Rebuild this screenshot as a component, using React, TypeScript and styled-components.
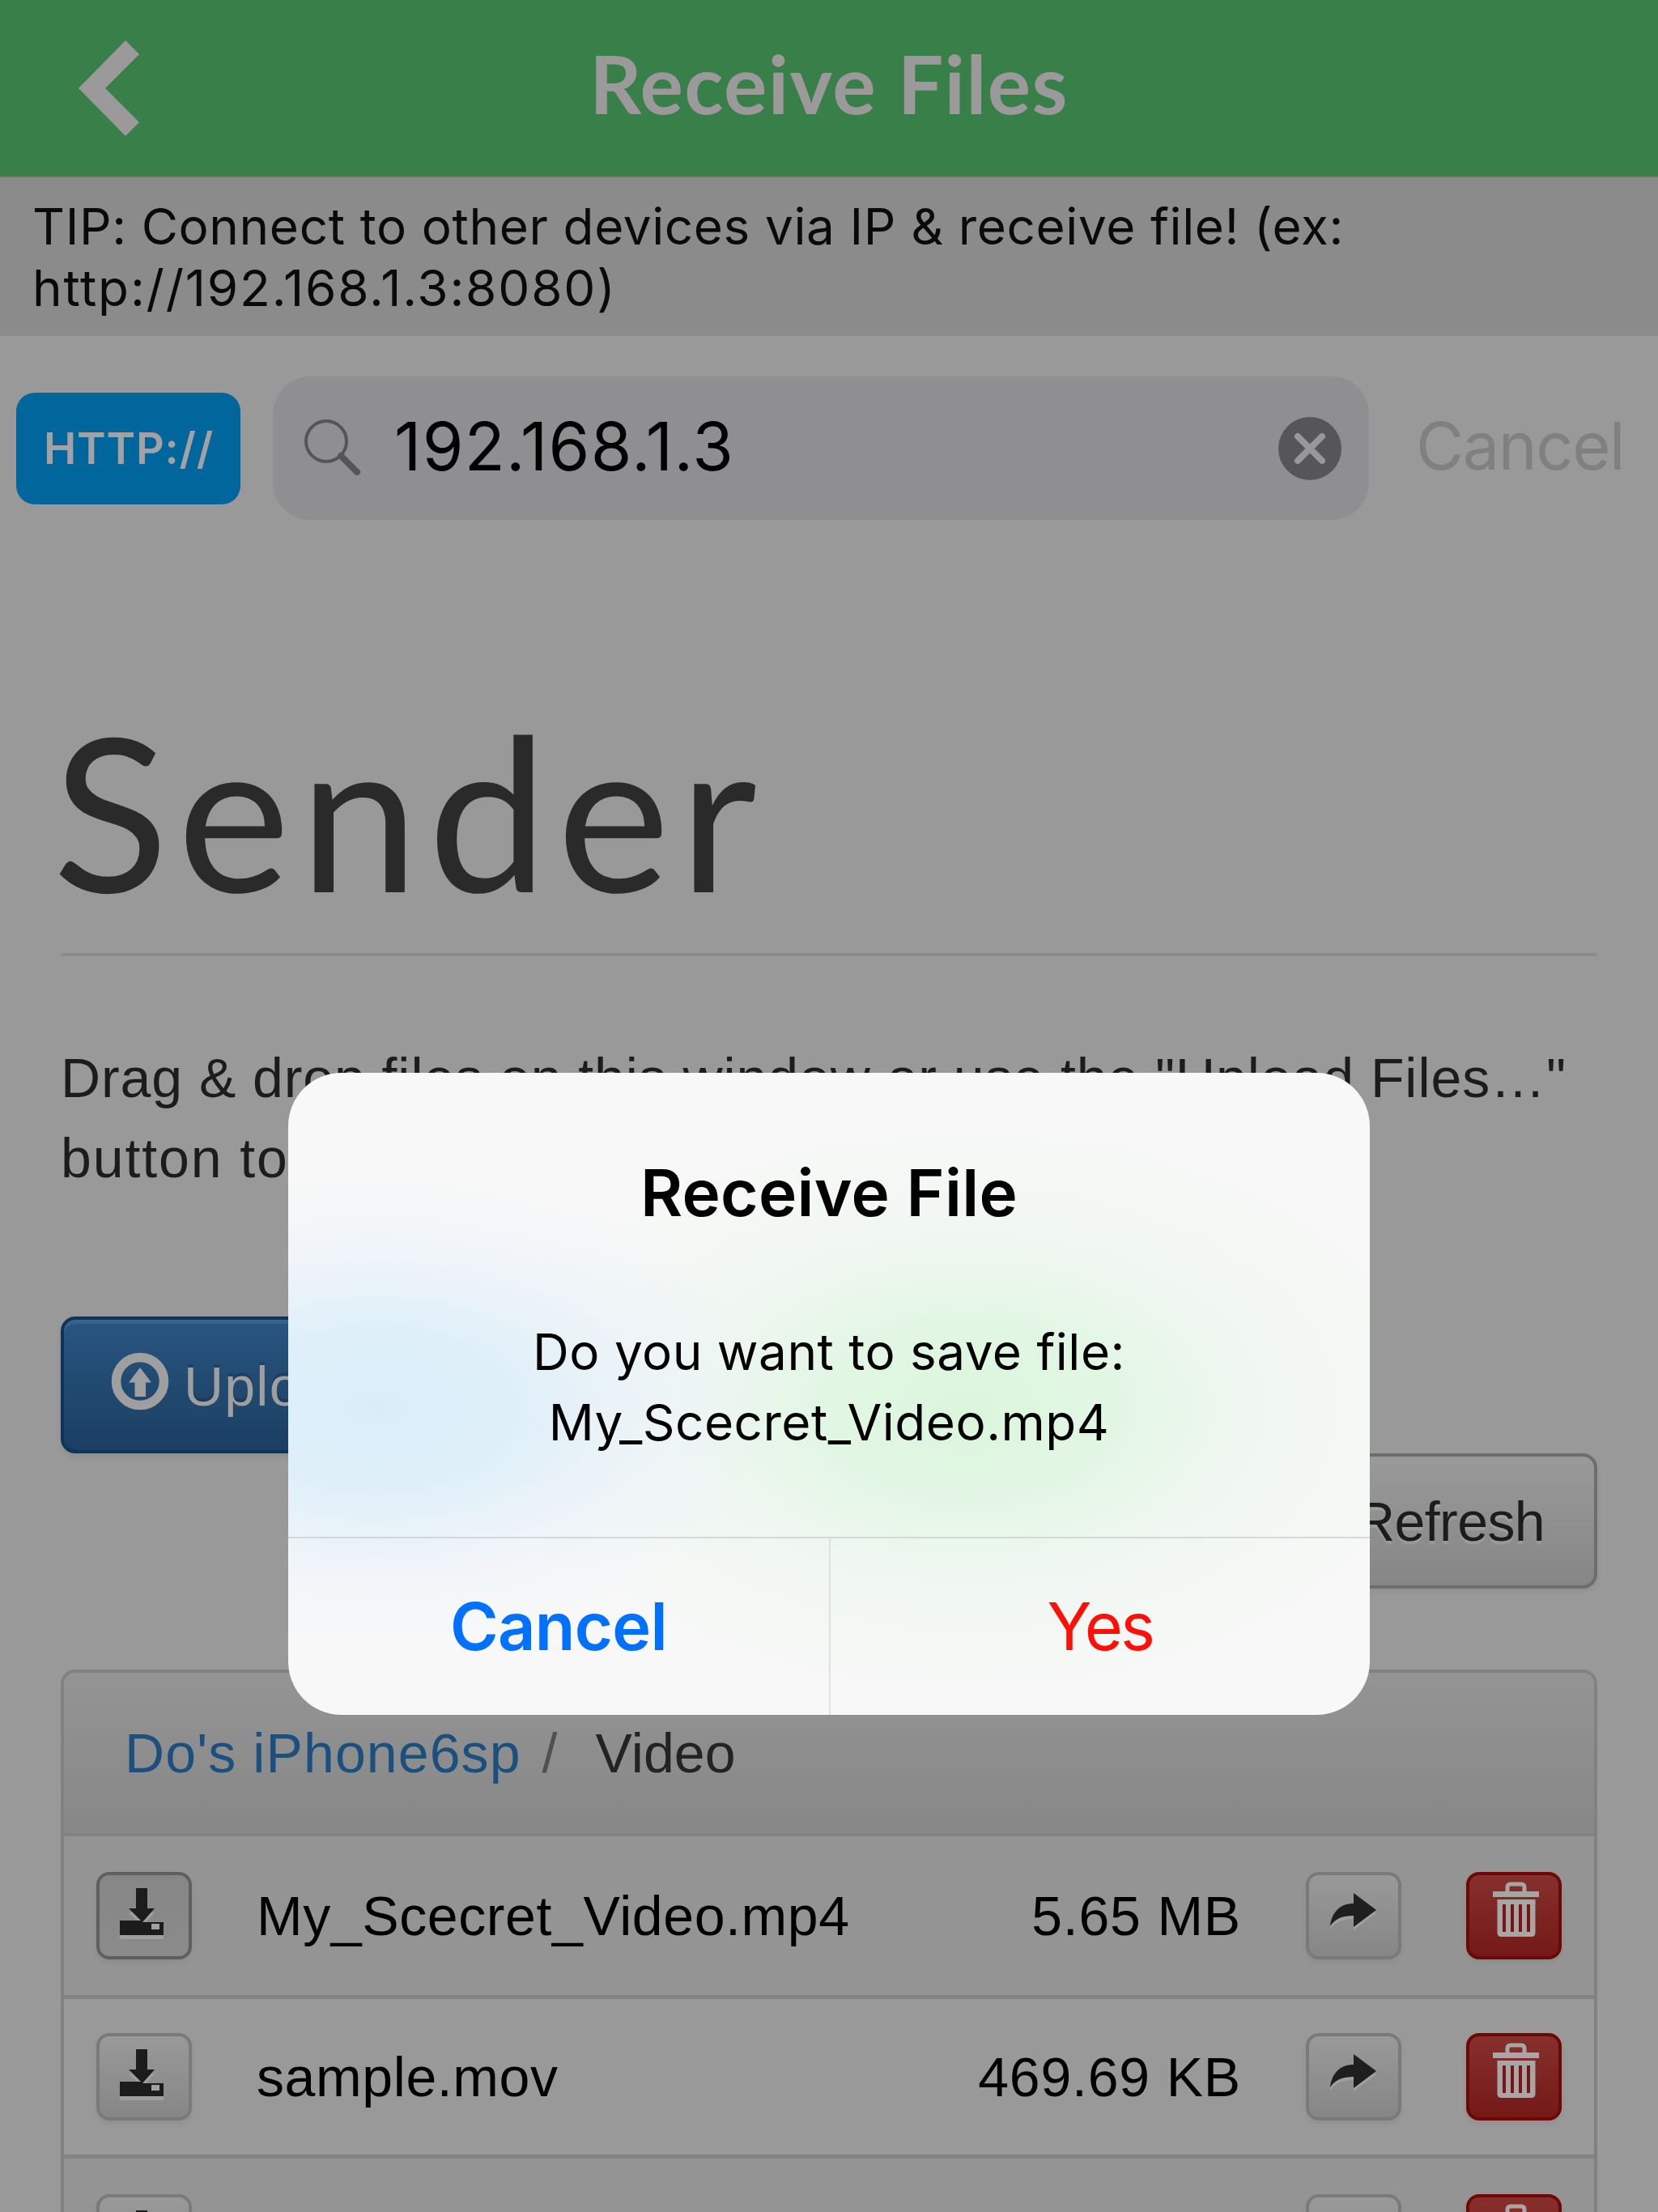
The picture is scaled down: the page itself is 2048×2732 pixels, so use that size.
import React from "react";
import styled, { createGlobalStyle, css } from "styled-components";

const UI = `Inter, "Liberation Sans", sans-serif`;
const WEB = `"Liberation Sans", Arial, sans-serif`;
const TITLE = `Lato, "Open Sans", sans-serif`;

const GlobalStyle = createGlobalStyle`
  *, *::before, *::after { box-sizing: border-box; }
  html, body { margin: 0; padding: 0; background: #999; }
  button { margin: 0; padding: 0; border: 0; background: none; font: inherit; color: inherit; }
  h1, h2, p { margin: 0; font-weight: 400; }
  svg { display: block; overflow: visible; flex: none; }
`;

const Screen = styled.div`
  position: relative;
  width: 2048px;
  height: 2732px;
  overflow: hidden;
  background: #999;
  color: #000;
  font-family: ${UI};
  white-space: nowrap;
`;

const NavBar = styled.header`
  display: grid;
  grid-template-columns: 1fr auto 1fr;
  height: 219px;
  background: #387f4a;
  border-bottom: 2px solid #66756a;
`;

const BackButton = styled.button`
  justify-self: start;
  align-self: start;
  padding: 50px 0 0 97px;
`;

const NavTitle = styled.h1`
  font: 700 100px/205px ${TITLE};
  color: #9b999a;
  letter-spacing: 1.4px;
`;

const Tip = styled.p`
  height: 196px;
  padding: 23px 0 0 40px;
  background: #8b8b8b;
  font-size: 62px;
  line-height: 76px;
  color: #0a0a0a;
  letter-spacing: 0.62px;
`;

const TipUrl = styled.span`
  letter-spacing: 1.8px;
`;

const AddressRow = styled.div`
  display: flex;
  align-items: center;
  height: 179px;
  margin-top: 49px;
  padding-left: 20px;
`;

const Scheme = styled.button`
  width: 277px;
  height: 138px;
  padding-left: 1px;
  border-radius: 23px;
  background: #00669b;
  color: #a4a1a4;
  font-size: 54px;
  font-weight: 600;
  line-height: 138px;
  letter-spacing: 0.8px;
`;

const Field = styled.div`
  display: flex;
  align-items: center;
  width: 1354px;
  height: 177px;
  margin-left: 40px;
  padding: 0 34px 0 37px;
  border-radius: 46px;
  background: #8f8f91;
`;

const Address = styled.span`
  flex: 1;
  padding: 0 0 4px 41px;
  font-size: 82px;
  line-height: 100px;
  letter-spacing: 1.3px;
`;

const RowCancel = styled.button`
  margin-left: 58px;
  padding-bottom: 5px;
  font-size: 81px;
  line-height: 100px;
  color: #808080;
  letter-spacing: -1.4px;
`;

const Page = styled.main`
  display: flex;
  flex-direction: column;
  padding: 227px 75px 0;
  font-family: ${WEB};
  font-size: 68px;
`;

const DeviceName = styled.h1`
  height: 311px;
  border-bottom: 4px solid #8b8b8b;
  font: 400 264px/260px ${TITLE};
  color: #2a2a2a;
  letter-spacing: 11.5px;
  text-indent: -10px;
`;

const Intro = styled.p`
  margin-top: 101px;
  line-height: 99px;
  color: #1c1c1c;
  letter-spacing: 0.92px;
`;

const IntroTail = styled.span`
  letter-spacing: 1.9px;
`;

const silver = css`
  border: 4px solid #7a7a7a;
  background: linear-gradient(#999, #868686);
  box-shadow: 0 4px 6px rgba(0, 0, 0, 0.06);
`;

const UploadButton = styled.button`
  display: flex;
  align-items: center;
  align-self: flex-start;
  gap: 19px;
  height: 169px;
  margin-top: 146px;
  padding: 0 59px;
  border: 4px solid #0d355c;
  border-radius: 18px;
  background: linear-gradient(#285580, #1b3f62);
  box-shadow: 0 4px 6px rgba(0, 0, 0, 0.08), inset 0 5px 0 rgba(255, 255, 255, 0.08);
  color: #9f9f9f;
  letter-spacing: 1.2px;
  text-shadow: 0 -4px 0 rgba(0, 0, 0, 0.16);
  & > svg { margin-bottom: 10px; }
  & > span { padding-top: 2px; }
`;

const RefreshButton = styled.button`
  ${silver}
  align-self: flex-end;
  width: 400px;
  height: 167px;
  padding-right: 61px;
  border-color: #6d6d6d;
  border-radius: 18px;
  color: #1c1c1c;
  text-align: right;
  letter-spacing: -0.6px;
  text-shadow: 0 4px 0 rgba(255, 255, 255, 0.12);
`;

const Panel = styled.section`
  height: 800px;
  margin-top: 100px;
  border: 4px solid #818181;
  border-radius: 18px;
`;

const Crumbs = styled.nav`
  display: flex;
  align-items: center;
  height: 202px;
  padding-left: 75px;
  border-bottom: 4px solid #828282;
  border-radius: 14px 14px 0 0;
  background: linear-gradient(#949494, #878787);
  color: #232323;
`;

const CrumbLink = styled.a`
  color: #1b507e;
  letter-spacing: 1.1px;
`;

const CrumbSlash = styled.span`
  margin: 0 47px 0 26px;
  color: #505050;
`;

const CrumbCurrent = styled.span`
  letter-spacing: 0.1px;
`;

const FileRow = styled.div<{ $odd?: boolean }>`
  display: grid;
  grid-template-columns: 118px 1fr auto 118px 198px;
  align-items: center;
  height: ${(p) => (p.$odd ? 201 : 197)}px;
  padding: 0 40px;
  border-bottom: 5px solid #838383;
  background: ${(p) => (p.$odd ? "#949494" : "#999")};
`;

const FileName = styled.span`
  padding-left: 80px;
  letter-spacing: 0.6px;
`;

const FileSize = styled.span`
  padding-right: 80px;
  letter-spacing: 0.8px;
`;

const IconButton = styled.button<{ $tone?: "pressed" | "danger" }>`
  ${silver}
  width: 118px;
  height: 108px;
  border-radius: 16px;
  & > svg { margin: -4px; }
  ${(p) =>
    p.$tone === "pressed" &&
    css`
      border-color: #5f5f5f;
      background: linear-gradient(#868686, #8b8b8b);
    `}
  ${(p) =>
    p.$tone === "danger" &&
    css`
      justify-self: end;
      border-color: #6d0806;
      background: linear-gradient(#86302d, #741917);
    `}
`;

const Overlay = styled.div`
  position: absolute;
  inset: 0;
  display: flex;
  justify-content: center;
  align-items: flex-start;
  padding-top: 1325px;
`;

const Alert = styled.div`
  display: flex;
  flex-direction: column;
  width: 1336px;
  height: 793px;
  border-radius: 66px;
  overflow: hidden;
  text-align: center;
  background:
    radial-gradient(ellipse 500px 290px at 110px 415px, rgba(217, 237, 249, 1), rgba(219, 238, 249, 0.85) 35%, rgba(232, 241, 250, 0.5) 68%, rgba(243, 246, 250, 0)),
    radial-gradient(ellipse 620px 370px at 840px 415px, rgba(219, 246, 221, 1), rgba(222, 246, 224, 0.85) 28%, rgba(234, 246, 236, 0.5) 60%, rgba(246, 248, 246, 0)),
    #f8f8f8;
`;

const AlertTitle = styled.h2`
  padding-top: 98px;
  font-size: 80px;
  font-weight: 600;
  line-height: 100px;
  letter-spacing: 0.3px;
`;

const AlertText = styled.p`
  flex: 1;
  padding-top: 103px;
  font-size: 62px;
  line-height: 87px;
  letter-spacing: 0.5px;
`;

const AlertActions = styled.div`
  display: grid;
  grid-template-columns: 1fr 1fr;
  height: 220px;
  border-top: 2px solid #d0dbda;
`;

const AlertButton = styled.button<{ $color: string; $bold?: boolean }>`
  padding-bottom: 1px;
  border-left: ${(p) => (p.$bold ? 0 : 2)}px solid #dbe3e0;
  color: ${(p) => p.$color};
  font-size: 81px;
  font-weight: ${(p) => (p.$bold ? 600 : 400)};
  letter-spacing: ${(p) => (p.$bold ? -0.7 : -2.5)}px;
`;

const BackIcon = () => (
  <svg width="75" height="118" viewBox="0 0 75 118" fill="#9b999a">
    <path d="M58 0 75 17 33 59 75 101 58 118 0 59Z" />
  </svg>
);

const SearchIcon = () => (
  <svg width="72" height="76" viewBox="0 0 72 76" fill="none" stroke="#555558" strokeLinecap="round">
    <circle cx="29" cy="29" r="25" strokeWidth="4" />
    <path d="M47 47 67 67" strokeWidth="8" />
  </svg>
);

const ClearIcon = () => (
  <svg width="78" height="78" viewBox="0 0 78 78">
    <circle cx="39" cy="39" r="39" fill="#55555a" />
    <path d="M24 24 54 54M54 24 24 54" stroke="#98989a" strokeWidth="8" strokeLinecap="round" />
  </svg>
);

const UploadIcon = () => (
  <svg width="70" height="70" viewBox="0 0 70 70">
    <circle cx="35" cy="35" r="29.500" fill="none" stroke="#9f9f9f" strokeWidth="11.500" />
    <path d="M35 18 49 36.500H42V54H28.500V36.500H21Z" fill="#9f9f9f" />
  </svg>
);

const DownloadShape = () => <path d="M49 20H63V45H72L57 62H83V78H29V60H55L40 45H49Z" />;

const DownloadIcon = () => (
  <svg width="118" height="108" viewBox="0 0 118 108" fill="#1c1c1c">
    <g fill="#9f9f9f" transform="translate(0 5)">
      <DownloadShape />
    </g>
    <DownloadShape />
    <rect x="68" y="64" width="10" height="7" fill="#a2a2a2" />
  </svg>
);

const sharePath = "M30 67C32 49 43 39 59 39V26L87 47 59 68V54C46 54 37 57 30 67Z";

const ShareIcon = () => (
  <svg width="118" height="108" viewBox="0 0 118 108" fill="#1f1f1f">
    <path d={sharePath} fill="#a0a0a0" transform="translate(0 4)" />
    <path d={sharePath} />
  </svg>
);

const TrashIcon = () => (
  <svg width="118" height="108" viewBox="0 0 118 108" fill="none" stroke="#aaa5a5">
    <path d="M51 25V19Q51 15 55 15H68Q72 15 72 19V25" strokeWidth="5" />
    <path d="M33 27.500H90" strokeWidth="7" />
    <path
      d="M38.500 34H85.500V75Q85.500 80 80.500 80H43.500Q38.500 80 38.500 75Z"
      fill="#aaa5a5"
      stroke="none"
    />
    <path d="M47 40V74M57 40V74M67 40V74M77 40V74" stroke="#7a1513" strokeWidth="4" />
  </svg>
);

const files = [
  { name: "My_Scecret_Video.mp4", size: "5.65 MB", pressed: true },
  { name: "sample.mov", size: "469.69 KB", pressed: false },
  { name: "", size: "", pressed: false },
];

export default function App() {
  return (
    <Screen>
      <GlobalStyle />
      <NavBar>
        <BackButton aria-label="Back">
          <BackIcon />
        </BackButton>
        <NavTitle>Receive Files</NavTitle>
      </NavBar>
      <Tip>
        TIP: Connect to other devices via IP &amp; receive file! (ex:
        <br />
        <TipUrl>http://192.168.1.3:8080)</TipUrl>
      </Tip>
      <AddressRow>
        <Scheme>HTTP://</Scheme>
        <Field>
          <SearchIcon />
          <Address>192.168.1.3</Address>
          <ClearIcon />
        </Field>
        <RowCancel>Cancel</RowCancel>
      </AddressRow>
      <Page>
        <DeviceName>Sender</DeviceName>
        <Intro>
          Drag &amp; drop files on this window or use the "Upload Files…"
          <br />
          <IntroTail>button to</IntroTail>
        </Intro>
        <UploadButton>
          <UploadIcon />
          <span>Upload Files…</span>
        </UploadButton>
        <RefreshButton>Refresh</RefreshButton>
        <Panel>
          <Crumbs>
            <CrumbLink>Do's iPhone6sp</CrumbLink>
            <CrumbSlash>/</CrumbSlash>
            <CrumbCurrent>Video</CrumbCurrent>
          </Crumbs>
          {files.map((f, i) => (
            <FileRow key={i} $odd={i % 2 === 0}>
              <IconButton $tone={f.pressed ? "pressed" : undefined}>
                <DownloadIcon />
              </IconButton>
              <FileName>{f.name}</FileName>
              <FileSize>{f.size}</FileSize>
              <IconButton>
                <ShareIcon />
              </IconButton>
              <IconButton $tone="danger">
                <TrashIcon />
              </IconButton>
            </FileRow>
          ))}
        </Panel>
      </Page>
      <Overlay>
        <Alert role="alertdialog">
          <AlertTitle>Receive File</AlertTitle>
          <AlertText>
            Do you want to save file:
            <br />
            My_Scecret_Video.mp4
          </AlertText>
          <AlertActions>
            <AlertButton $color="#0071ff" $bold>
              Cancel
            </AlertButton>
            <AlertButton $color="#ff0f05">Yes</AlertButton>
          </AlertActions>
        </Alert>
      </Overlay>
    </Screen>
  );
}
